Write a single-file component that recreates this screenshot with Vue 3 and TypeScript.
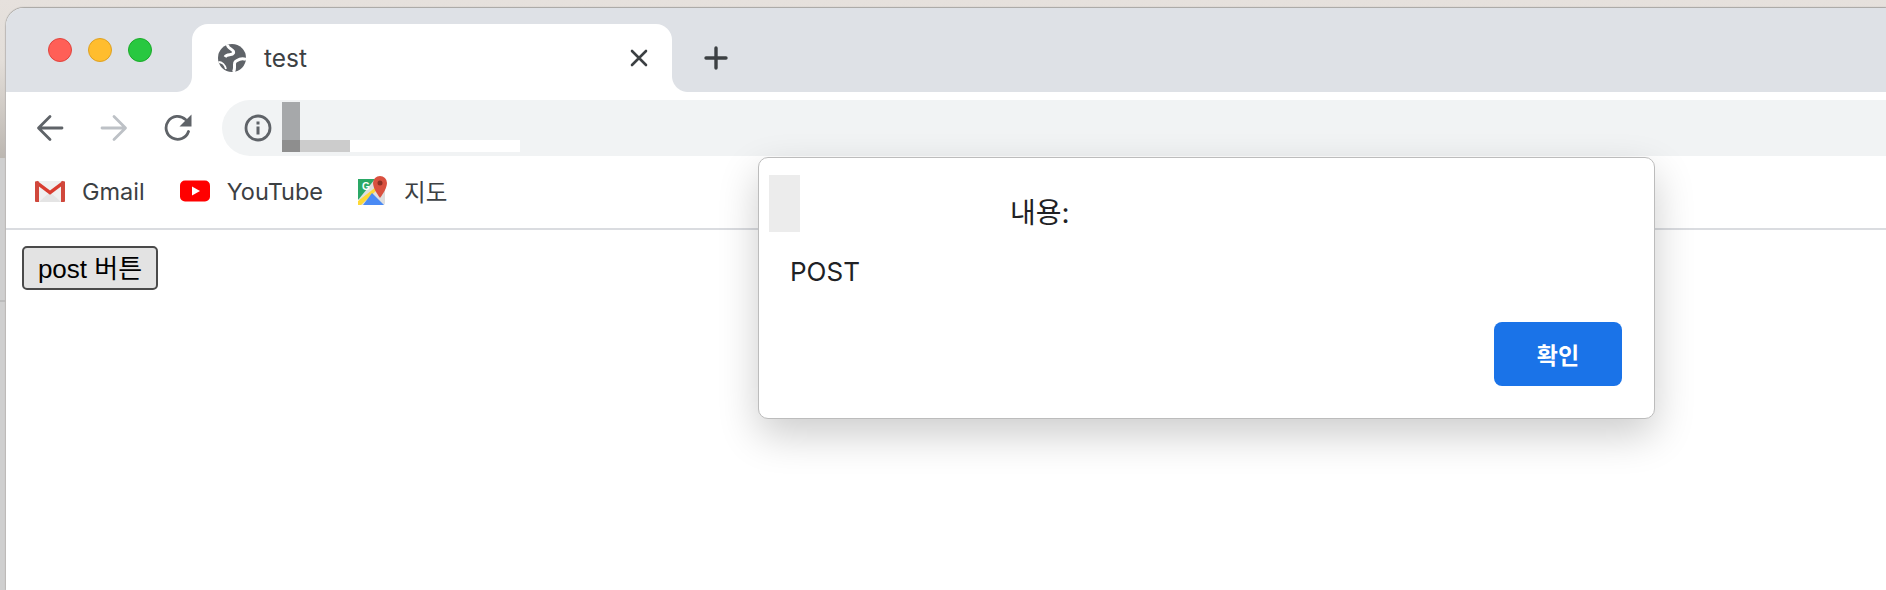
<template>
	<div class="desktop">
		<div class="side-wall"></div>
		<div class="window">
			<div class="tab-strip">
				<div class="lights">
					<span class="light light--red"></span>
					<span class="light light--yellow"></span>
					<span class="light light--green"></span>
				</div>
				<div class="tab">
					<svg class="tab__globe" viewBox="0 0 28 28" width="28" height="28">
						<circle cx="14" cy="14" r="14" fill="#5f6368" />
						<path d="M9.500 0.500C9 5 17 5 15.500 9C14 12 9 9.500 7 13" fill="none" stroke="#fff" stroke-width="3" />
						<path d="M28 15.500C23 13 20 16 17.500 17.500C15 19.500 18 23 15.500 28" fill="none" stroke="#fff" stroke-width="3" />
						<path d="M0.500 18C4 18 7 21 8 25" fill="none" stroke="#fff" stroke-width="1.800" />
					</svg>
					<span class="tab__title">test</span>
					<svg class="tab__close" viewBox="0 0 18 18" width="18" height="18">
						<path d="M2 2l14 14M16 2L2 16" stroke="#3c4043" stroke-width="2.600" stroke-linecap="round" />
					</svg>
				</div>
				<svg class="new-tab" viewBox="0 0 24 24" width="24" height="24">
					<path d="M12 2v20M2 12h20" stroke="#3c4043" stroke-width="3.400" stroke-linecap="round" />
				</svg>
			</div>

			<div class="toolbar">
				<svg class="nav-icon" viewBox="0 0 28 28" width="28" height="28">
					<path d="M26 14H3M14 2.500L2.500 14 14 25.500" fill="none" stroke="#5f6368" stroke-width="2.800" stroke-linecap="round" stroke-linejoin="round" />
				</svg>
				<svg class="nav-icon" viewBox="0 0 28 28" width="28" height="28">
					<path d="M2 14h23M14 2.500L25.500 14 14 25.500" fill="none" stroke="#bdc1c6" stroke-width="2.800" stroke-linecap="round" stroke-linejoin="round" />
				</svg>
				<svg class="nav-icon" viewBox="0 0 28 28" width="28" height="28">
					<path d="M24.500 17.500A11.500 11.500 0 1 1 21.500 5.500" fill="none" stroke="#5f6368" stroke-width="2.800" stroke-linecap="round" />
					<path d="M27.500 0.500v12h-12z" fill="#5f6368" />
				</svg>
				<div class="omnibox">
					<svg class="omnibox__info" viewBox="0 0 28 28" width="28" height="28">
						<circle cx="14" cy="14" r="12" fill="none" stroke="#5f6368" stroke-width="2.800" />
						<rect x="12.500" y="12.500" width="3" height="8" fill="#5f6368" />
						<rect x="12.500" y="7.500" width="3" height="3" fill="#5f6368" />
					</svg>
					<span class="mask mask--bar"></span>
					<span class="mask mask--white"></span>
					<span class="mask mask--light"></span>
					<span class="mask mask--dark"></span>
				</div>
			</div>

			<div class="bookmarks">
				<div v-for="item in bookmarks" :key="item.label" class="bookmark">
					<svg v-if="item.icon === 'gmail'" viewBox="0 0 30 24" width="30" height="24">
						<path d="M0 2h30v21H0z" fill="#f0f0f0" />
						<path d="M4 23L15 13l11 10z" fill="#e4e4e4" />
						<path d="M1 3l14 10.500L29 3" fill="none" stroke="#d93d30" stroke-width="3.400" />
						<path d="M0 2.500h4V23H1a1 1 0 0 1-1-1zM26 2.500h4V22a1 1 0 0 1-1 1h-3z" fill="#d0483c" />
					</svg>
					<svg v-else-if="item.icon === 'youtube'" viewBox="0 0 30 22" width="30" height="22">
						<rect width="30" height="21" y="0.500" rx="5" fill="#ff0000" />
						<path d="M12 6.500l8 4.500-8 4.500z" fill="#fff" />
					</svg>
					<svg v-else viewBox="0 0 29 30" width="29" height="30">
						<path d="M1 3h26v24a2 2 0 0 1-2 2H1z" fill="#dedede" />
						<path d="M0 3h17L0 24z" fill="#2aa866" />
						<path d="M0 25L18 11l2 2L3 29H0z" fill="#fdd835" />
						<path d="M5 29l9-12 12 12z" fill="#4a8af4" />
						<path d="M22 0a7 7 0 0 0-7 7c0 6 7 15 7 15s7-9 7-15a7 7 0 0 0-7-7z" fill="#d9503f" />
						<circle cx="22" cy="7" r="2.500" fill="#8b2f24" />
						<text x="4" y="14" class="maps-g">G</text>
					</svg>
					<span class="bookmark__label">{{ item.label }}</span>
				</div>
			</div>

			<div class="content">
				<button class="post-button" type="button">post 버튼</button>
			</div>

			<div class="dialog">
				<span class="dialog__mask"></span>
				<div class="dialog__title">내용:</div>
				<div class="dialog__message">POST</div>
				<div class="dialog__actions">
					<button class="dialog__ok" type="button">확인</button>
				</div>
			</div>
		</div>
	</div>
</template>
<script setup lang="ts">
	interface Bookmark {
		label: string;
		icon: 'gmail' | 'youtube' | 'maps';
	}

	const bookmarks: Bookmark[] = [
		{ label: 'Gmail', icon: 'gmail' },
		{ label: 'YouTube', icon: 'youtube' },
		{ label: '지도', icon: 'maps' },
	];
</script>
<style scoped>
	.desktop {
		height: 590px;
		display: flex;
		padding-top: 8px;
		box-sizing: border-box;
		background: linear-gradient(#e6e1dd 0, #e3ded9 60px, #bcb7b1 158px);
		position: relative;
		overflow: hidden;
	}
	.side-wall {
		width: 6px;
		flex: none;
		margin-top: 150px;
		background: linear-gradient(#cfcfcf 142px, #bcbcbc 142px, #bcbcbc 144px, #cfcfcf 144px);
	}
	.window {
		flex: 1;
		position: relative;
		background: #fff;
		border-top-left-radius: 18px;
		box-shadow: 0 -1px 1px #a8a6a3, -1px 0 1px #bdbbb9;
		overflow: hidden;
		display: flex;
		flex-direction: column;
	}
	.tab-strip {
		height: 84px;
		flex: none;
		background: #dee1e6;
		display: flex;
		align-items: flex-end;
		padding-left: 42px;
	}
	.lights {
		display: flex;
		gap: 16px;
		width: 144px;
		align-self: flex-start;
		padding-top: 30px;
	}
	.light {
		width: 24px;
		height: 24px;
		border-radius: 50%;
		box-sizing: border-box;
	}
	.light--red {
		background: #ff5f57;
		border: 1px solid #e0443e;
	}
	.light--yellow {
		background: #ffbd2e;
		border: 1px solid #dea123;
	}
	.light--green {
		background: #28c840;
		border: 1px solid #1aab29;
	}
	.tab {
		width: 480px;
		height: 68px;
		flex: none;
		background: #fff;
		border-radius: 16px 16px 0 0;
		position: relative;
		display: flex;
		align-items: center;
		padding: 0 24px 0 26px;
		box-sizing: border-box;
	}
	.tab::before,
	.tab::after {
		content: '';
		position: absolute;
		bottom: 0;
		width: 16px;
		height: 16px;
	}
	.tab::before {
		left: -16px;
		background: radial-gradient(circle at 0 0, #dee1e6 15.500px, #fff 16.500px);
	}
	.tab::after {
		right: -16px;
		background: radial-gradient(circle at 100% 0, #dee1e6 15.500px, #fff 16.500px);
	}
	.tab__title {
		margin-left: 18px;
		flex: 1;
		font: 400 24.500px Inter, "Liberation Sans", sans-serif;
		color: #3c4043;
	}
	.new-tab {
		margin: 0 0 22px 32px;
	}
	.toolbar {
		height: 72px;
		flex: none;
		display: flex;
		align-items: center;
		padding-left: 30px;
		gap: 36px;
	}
	.omnibox {
		flex: 1;
		height: 56px;
		margin-left: -6px;
		background: #f1f3f4;
		border-radius: 28px 0 0 28px;
		position: relative;
		display: flex;
		align-items: center;
		padding-left: 22px;
	}
	.mask {
		position: absolute;
		display: block;
	}
	.mask--bar {
		left: 60px;
		top: 2px;
		width: 18px;
		height: 38px;
		background: #a6a8aa;
	}
	.mask--white {
		left: 78px;
		top: 40px;
		width: 220px;
		height: 12px;
		background: #fff;
	}
	.mask--light {
		left: 78px;
		top: 40px;
		width: 50px;
		height: 12px;
		background: #cccccc;
	}
	.mask--dark {
		left: 60px;
		top: 40px;
		width: 18px;
		height: 12px;
		background: #8e8e8e;
	}
	.bookmarks {
		height: 66px;
		flex: none;
		box-sizing: border-box;
		border-bottom: 2px solid #dadce0;
		display: flex;
		align-items: center;
		padding: 0 0 10px 29px;
		gap: 35px;
	}
	.bookmark {
		display: flex;
		align-items: center;
		gap: 17px;
	}
	.bookmark__label {
		font: 400 23.500px Inter, "Noto Sans CJK KR", sans-serif;
		color: #3c4043;
	}
	.maps-g {
		font: 700 10px "Liberation Sans", sans-serif;
		fill: #fff;
	}
	.content {
		flex: 1;
		padding: 16px;
	}
	.post-button {
		height: 44px;
		width: 136px;
		padding: 0 0 12px;
		background: #e3e3e3;
		border: 2px solid #4a4a4a;
		border-radius: 5px;
		font: 400 26px "Liberation Sans", "Noto Sans CJK KR", sans-serif;
		color: #000;
	}
	.dialog {
		position: absolute;
		left: 752px;
		top: 149px;
		width: 897px;
		height: 262px;
		box-sizing: border-box;
		background: #fff;
		border: 1px solid #bcbcbc;
		border-radius: 10px;
		box-shadow: 0 16px 40px rgba(0, 0, 0, 0.2);
		padding: 0 32px 0 31px;
	}
	.dialog__mask {
		position: absolute;
		left: 10px;
		top: 17px;
		width: 31px;
		height: 57px;
		background: #ececec;
	}
	.dialog__title {
		margin-top: 37px;
		padding-left: 220px;
		font: 400 28px Inter, "Noto Sans CJK KR", sans-serif;
		line-height: 36px;
		color: #202124;
	}
	.dialog__message {
		margin-top: 24px;
		font: 400 26px Inter, sans-serif;
		line-height: 34px;
		color: #202124;
	}
	.dialog__actions {
		display: flex;
		justify-content: flex-end;
		margin-top: 33px;
	}
	.dialog__ok {
		width: 128px;
		height: 64px;
		border: 0;
		border-radius: 8px;
		background: #1a73e8;
		color: #fff;
		font: 600 23px "Noto Sans CJK KR", sans-serif;
	}
</style>
<style>
	html,
	body {
		margin: 0;
		background: #fff;
	}
</style>
